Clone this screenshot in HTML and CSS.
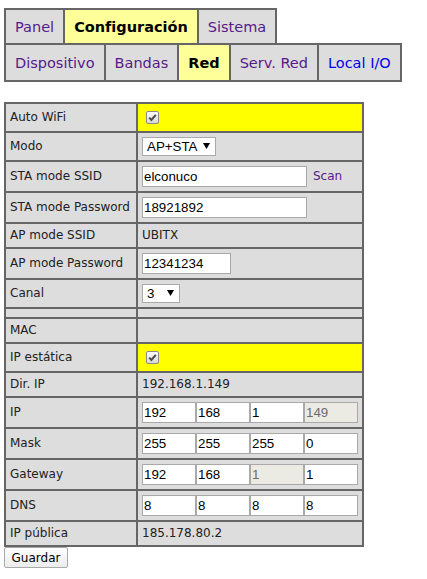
FILE: index.html
```html
<!DOCTYPE html>
<html lang="es">
<head>
<meta charset="utf-8">
<title>Red</title>
<link rel="stylesheet" href="styles.css">
</head>
<body>
<nav class="tabs">
  <div class="tab-row row1">
    <a class="tab" href="#panel">Panel</a>
    <span class="tab active">Configuración</span>
    <a class="tab" href="#sistema">Sistema</a>
  </div>
  <div class="tab-row row2">
    <a class="tab" href="#dispositivo">Dispositivo</a>
    <a class="tab" href="#bandas">Bandas</a>
    <span class="tab active">Red</span>
    <a class="tab" href="#serv">Serv. Red</a>
    <a class="tab fresh" href="#io">Local I/O</a>
  </div>
</nav>
<form class="form">
<table class="grid">
  <tr>
    <td class="label">Auto WiFi</td>
    <td class="value yellow"><div class="field"><label class="chk"><input type="checkbox" checked><svg viewBox="0 0 13 13" width="13" height="13"><path d="M3.2 6.6 5.4 8.9 9.8 3.8"/></svg></label></div></td>
  </tr>
  <tr>
    <td class="label">Modo</td>
    <td class="value"><div class="field"><span class="sel"><select class="mode"><option>AP+STA</option></select><svg class="arrow" viewBox="0 0 7 6" width="7" height="6"><path d="M0 0H7L3.5 6Z"/></svg></span></div></td>
  </tr>
  <tr>
    <td class="label">STA mode SSID</td>
    <td class="value"><div class="field"><input class="txt wide" type="text" value="elconuco"><a class="scan" href="#scan">Scan</a></div></td>
  </tr>
  <tr>
    <td class="label">STA mode Password</td>
    <td class="value"><div class="field"><input class="txt wide" type="text" value="18921892"></div></td>
  </tr>
  <tr>
    <td class="label">AP mode SSID</td>
    <td class="value">UBITX</td>
  </tr>
  <tr>
    <td class="label">AP mode Password</td>
    <td class="value"><div class="field"><input class="txt short" type="text" value="12341234"></div></td>
  </tr>
  <tr>
    <td class="label">Canal</td>
    <td class="value"><div class="field"><span class="sel"><select class="canal"><option>3</option></select><svg class="arrow" viewBox="0 0 7 6" width="7" height="6"><path d="M0 0H7L3.5 6Z"/></svg></span></div></td>
  </tr>
  <tr>
    <td class="label"></td>
    <td class="value"></td>
  </tr>
  <tr>
    <td class="label">MAC</td>
    <td class="value"></td>
  </tr>
  <tr>
    <td class="label">IP estática</td>
    <td class="value yellow"><div class="field"><label class="chk"><input type="checkbox" checked><svg viewBox="0 0 13 13" width="13" height="13"><path d="M3.2 6.6 5.4 8.9 9.8 3.8"/></svg></label></div></td>
  </tr>
  <tr>
    <td class="label">Dir. IP</td>
    <td class="value">192.168.1.149</td>
  </tr>
  <tr>
    <td class="label">IP</td>
    <td class="value"><div class="field"><input class="txt oct" type="text" value="192"><input class="txt oct" type="text" value="168"><input class="txt oct" type="text" value="1"><input class="txt oct" type="text" value="149" disabled></div></td>
  </tr>
  <tr>
    <td class="label">Mask</td>
    <td class="value"><div class="field"><input class="txt oct" type="text" value="255"><input class="txt oct" type="text" value="255"><input class="txt oct" type="text" value="255"><input class="txt oct" type="text" value="0"></div></td>
  </tr>
  <tr>
    <td class="label">Gateway</td>
    <td class="value"><div class="field"><input class="txt oct" type="text" value="192"><input class="txt oct" type="text" value="168"><input class="txt oct" type="text" value="1" disabled><input class="txt oct" type="text" value="1"></div></td>
  </tr>
  <tr>
    <td class="label">DNS</td>
    <td class="value"><div class="field"><input class="txt oct" type="text" value="8"><input class="txt oct" type="text" value="8"><input class="txt oct" type="text" value="8"><input class="txt oct" type="text" value="8"></div></td>
  </tr>
  <tr>
    <td class="label">IP pública</td>
    <td class="value">185.178.80.2</td>
  </tr>
</table>
<button class="save" type="button">Guardar</button>
</form>
</body>
</html>
```
FILE: styles.css
```css
body {
  margin: 8px 4px;
  background: #fff;
  color: #222;
  font-family: "DejaVu Sans", Verdana, sans-serif;
  font-size: 12px;
}

.tabs {
  margin-bottom: 20px;
}

.tab-row {
  display: flex;
  margin-left: 2px;
}

.row2 {
  margin-top: -2px;
}

.tab {
  display: flex;
  align-items: center;
  padding: 0 9px;
  margin-left: -2px;
  border: 2px solid #666;
  background: #ddd;
  color: #551a8b;
  font-size: 14.5px;
  text-decoration: none;
}

.row1 .tab {
  height: 33px;
}

.row2 .tab {
  height: 35px;
}

.tab.active {
  background: #ffff99;
  color: #000;
  font-weight: bold;
}

.tab.fresh {
  color: #0000ee;
}

.form {
  margin: 0;
}

.grid {
  border-spacing: 0;
  border-top: 2px solid #666;
  border-left: 2px solid #666;
}

.grid td {
  background: #ddd;
  border-right: 2px solid #666;
  border-bottom: 2px solid #666;
  padding: 4px;
  line-height: 15px;
  vertical-align: middle;
  white-space: nowrap;
}

.grid td.label {
  width: 122px;
}

.grid td.value {
  width: 216px;
}

.grid td.yellow {
  background: #ffff00;
}

.field {
  display: flex;
  align-items: center;
}

.chk {
  position: relative;
  display: block;
  width: 13px;
  height: 13px;
  margin: 3px 3px 3px 4px;
}

.chk input {
  appearance: none;
  display: block;
  box-sizing: border-box;
  width: 13px;
  height: 13px;
  margin: 0;
  border: 1px solid #8a8a8a;
  border-radius: 2px;
  background: linear-gradient(#fdfdfd, #d8d8d8);
}

.chk svg {
  position: absolute;
  left: 0;
  top: 0;
  pointer-events: none;
  fill: none;
  stroke: #4a4a4a;
  stroke-width: 2;
}

.sel {
  position: relative;
  display: block;
}

.sel select {
  appearance: none;
  display: block;
  box-sizing: border-box;
  height: 19px;
  margin: 0;
  padding: 0 0 0 4px;
  border: 1px solid #aaa;
  border-radius: 0;
  background: #fff;
  color: #000;
  font-family: "Liberation Sans", Arial, sans-serif;
  font-size: 13.33px;
}

.sel .mode {
  width: 74px;
}

.sel .canal {
  width: 38px;
}

.sel .arrow {
  position: absolute;
  right: 6px;
  top: 6px;
  fill: #000;
  pointer-events: none;
}

.txt {
  box-sizing: border-box;
  height: 21px;
  margin: 0;
  padding: 1px;
  border: 1px solid #a9a9a9;
  background: #fff;
  color: #000;
  font-family: "Liberation Sans", Arial, sans-serif;
  font-size: 13.33px;
}

.txt:disabled {
  background: #ebebe4;
  color: #6d6d6d;
}

.txt.wide {
  width: 165px;
}

.txt.short {
  width: 89px;
}

.txt.oct {
  width: 54px;
}

.scan {
  margin-left: 6px;
  color: #551a8b;
  text-decoration: none;
}

.save {
  display: block;
  box-sizing: border-box;
  width: 64px;
  height: 21px;
  margin: 0;
  padding: 0;
  border: 1px solid #a9a9a9;
  border-radius: 2px;
  background: linear-gradient(#ffffff, #ececec);
  color: #000;
  font-family: "DejaVu Sans", Verdana, sans-serif;
  font-size: 12px;
}
```
